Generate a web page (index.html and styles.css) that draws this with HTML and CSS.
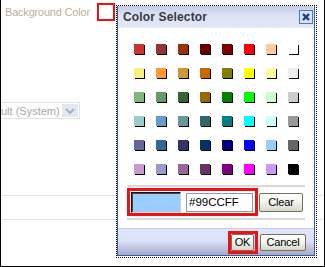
FILE: index.html
```html
<html>
    <head>
        <meta name="viewport" content="width=device-width, initial-scale=1.0">
        <title>Color Selector</title>
        <link rel="stylesheet" href="styles.css">
    </head>
    <body>
        <div class="screen">
            <div class="page">
                <div class="field-row">
                    <span class="field-label">Background Color</span>
                    <span class="color-pick"></span>
                </div>
                <div class="select">
                    <span class="select-text">ult (System)</span>
                    <span class="select-btn">
                        <svg width="10" height="6" viewBox="0 0 10 6"><path d="M1 1 L5 5 L9 1" fill="none" stroke="#9fb0c8" stroke-width="2"/></svg>
                    </span>
                </div>
                <div class="rule rule-1"></div>
                <div class="rule rule-2"></div>
            </div>

            <div class="dialog">
                <div class="frame">
                    <div class="titlebar">
                        <span class="title">Color Selector</span>
                        <span class="close">
                            <svg width="14" height="14" viewBox="0 0 14 14">
                                <rect x="0.5" y="0.5" width="13" height="13" fill="#d3e2f6" stroke="#4d79b3"/>
                                <path d="M4 4 L10 10 M10 4 L4 10" stroke="#1c3d78" stroke-width="2.4"/>
                            </svg>
                        </span>
                    </div>
                    <div class="content">
                        <div class="swatches" id="swatches"></div>
                        <div class="sep sep-1"></div>
                        <div class="picked">
                            <div class="picked-box">
                                <div class="preview"></div>
                                <input class="hex" type="text" value="#99CCFF">
                            </div>
                            <button class="btn btn-clear">Clear</button>
                        </div>
                        <div class="sep sep-2"></div>
                    </div>
                    <div class="footer">
                        <span class="ok-box"><button class="btn btn-ok">OK</button></span>
                        <button class="btn btn-cancel">Cancel</button>
                    </div>
                </div>
            </div>
        </div>
        <script>
            let colors = [
                '#cc3333','#993333','#993300','#660000','#800000','#ff0000','#ffcc99','#ffffff',
                '#f8f080','#ff9933','#cc9933','#cc6600','#808000','#ffff00','#ffff99','#eeeeee',
                '#80b87c','#669966','#336633','#996600','#008000','#00ff00','#ccffcc','#cccccc',
                '#99cccc','#6699cc','#669999','#336666','#008080','#00ffff','#ccffff','#999999',
                '#666699','#336699','#333366','#003366','#000080','#0000ff','#99ccff','#666666',
                '#cc99cc','#9999cc','#996699','#663366','#800080','#ff00ff','#cc99ff','#000000'
            ];
            let grid = document.getElementById('swatches');
            for (let i = 0; i < colors.length; i++) {
                let s = document.createElement('span');
                s.className = 'swatch';
                s.style.background = colors[i];
                grid.appendChild(s);
            }
        </script>
    </body>
</html>
```

FILE: styles.css
```css
html, body{
    margin: 0px;
    padding: 0px;
    background: white;
    font-family: 'Liberation Sans', Arial, sans-serif;
}
.screen{
    position: relative;
    width: 325px;
    height: 267px;
    box-sizing: border-box;
    border: 1px solid black;
    border-top: none;
    overflow: hidden;
}
.field-row{
    display: flex;
    align-items: center;
    padding-top: 3px;
}
.field-label{
    width: 92px;
    padding-left: 4px;
    font-size: 11px;
    letter-spacing: -0.2px;
    color: #bfae98;
}
.color-pick{
    width: 18px;
    height: 18px;
    box-sizing: border-box;
    border: 2px solid #ee1111;
}
.select{
    display: flex;
    align-items: center;
    justify-content: space-between;
    margin-top: 81px;
    margin-left: -1px;
    width: 80px;
    height: 17px;
    box-sizing: border-box;
    border: 1px solid #e2e2e2;
    padding-left: 0px;
    padding-right: 1px;
}
.select-text{
    font-size: 11px;
    color: #a8a8a8;
    white-space: nowrap;
}
.select-btn{
    display: flex;
    align-items: center;
    justify-content: center;
    width: 16px;
    height: 13px;
    background: #e2e8f2;
}
.rule{
    height: 1px;
    background: #e6e6de;
}
.rule-1{
    margin-top: 76px;
}
.rule-2{
    margin-top: 23px;
}
.dialog{
    position: absolute;
    left: 115px;
    top: 5px;
    width: 201px;
    height: 253px;
    box-sizing: border-box;
    border: 1px dotted black;
    background: white;
}
.frame{
    display: flex;
    flex-direction: column;
    width: 198px;
    height: 250px;
    box-sizing: border-box;
    border: 1px solid #2e6396;
    border-top: none;
}
.titlebar{
    display: flex;
    align-items: center;
    justify-content: space-between;
    height: 21px;
    padding-left: 5px;
    padding-right: 1px;
    border-bottom: 1px solid #e6eaf7;
    border-top-right-radius: 4px;
    background: linear-gradient(#c3cbe9, #dde2f4 45%, #e2e6f6);
}
.title{
    font-size: 12px;
    font-weight: bold;
    letter-spacing: 0.15px;
    color: #363a3e;
}
.close{
    display: flex;
    width: 14px;
    height: 14px;
}
.content{
    flex: 1;
}
.swatches{
    display: grid;
    grid-template-columns: repeat(8, 10px);
    column-gap: 12px;
    row-gap: 14px;
    padding-top: 16px;
    padding-left: 16px;
}
.swatch{
    display: block;
    width: 10px;
    height: 10px;
    box-shadow: 1px 1px 0 #000;
}
.sep{
    height: 2px;
    margin-left: 9px;
    width: 178px;
    background: #d8d8d8;
}
.sep-1{
    margin-top: 11px;
}
.sep-2{
    margin-top: 2px;
}
.picked{
    display: flex;
    align-items: center;
    margin-left: 9px;
    margin-top: 1px;
}
.picked-box{
    display: flex;
    align-items: center;
    width: 131px;
    height: 28px;
    box-sizing: border-box;
    border: 3px solid #ee1111;
    padding-left: 1px;
}
.preview{
    width: 50px;
    height: 21px;
    margin-top: 1px;
    box-sizing: border-box;
    background: #99ccff;
    border: 1px solid;
    border-color: #111 #d4d0c8 #d4d0c8 #111;
    box-shadow: inset 1px 1px 0 #444;
}
.hex{
    width: 67px;
    height: 19px;
    margin-left: 5px;
    box-sizing: border-box;
    border: 1px solid #7f9db9;
    padding: 0px 0px 0px 2px;
    font-family: 'Liberation Sans', Arial, sans-serif;
    font-size: 11.5px;
    color: black;
    outline: none;
}
.btn{
    box-sizing: border-box;
    height: 17px;
    padding: 0px;
    border: 1px solid #72725e;
    border-radius: 2px;
    background: linear-gradient(#ffffff, #f3f3ee 50%, #d8d6c8);
    font-family: 'Liberation Sans', Arial, sans-serif;
    font-size: 11px;
    letter-spacing: -0.2px;
    color: black;
}
.btn-clear{
    width: 44px;
    height: 19px;
    margin-left: 1px;
}
.footer{
    display: flex;
    align-items: center;
    justify-content: flex-end;
    height: 27px;
    box-sizing: border-box;
    border-top: 1px solid #c4cdef;
    padding-right: 8px;
    background: linear-gradient(#e0e6fb, #dbe2f8 45%, #b6b8d8 85%, #a6a6ca);
}
.ok-box{
    display: flex;
    align-items: center;
    justify-content: flex-start;
    width: 30px;
    height: 23px;
    box-sizing: border-box;
    border: 3px solid #ee1111;
}
.btn-ok{
    width: 23px;
}
.btn-cancel{
    width: 46px;
    margin-left: 2px;
}
```
